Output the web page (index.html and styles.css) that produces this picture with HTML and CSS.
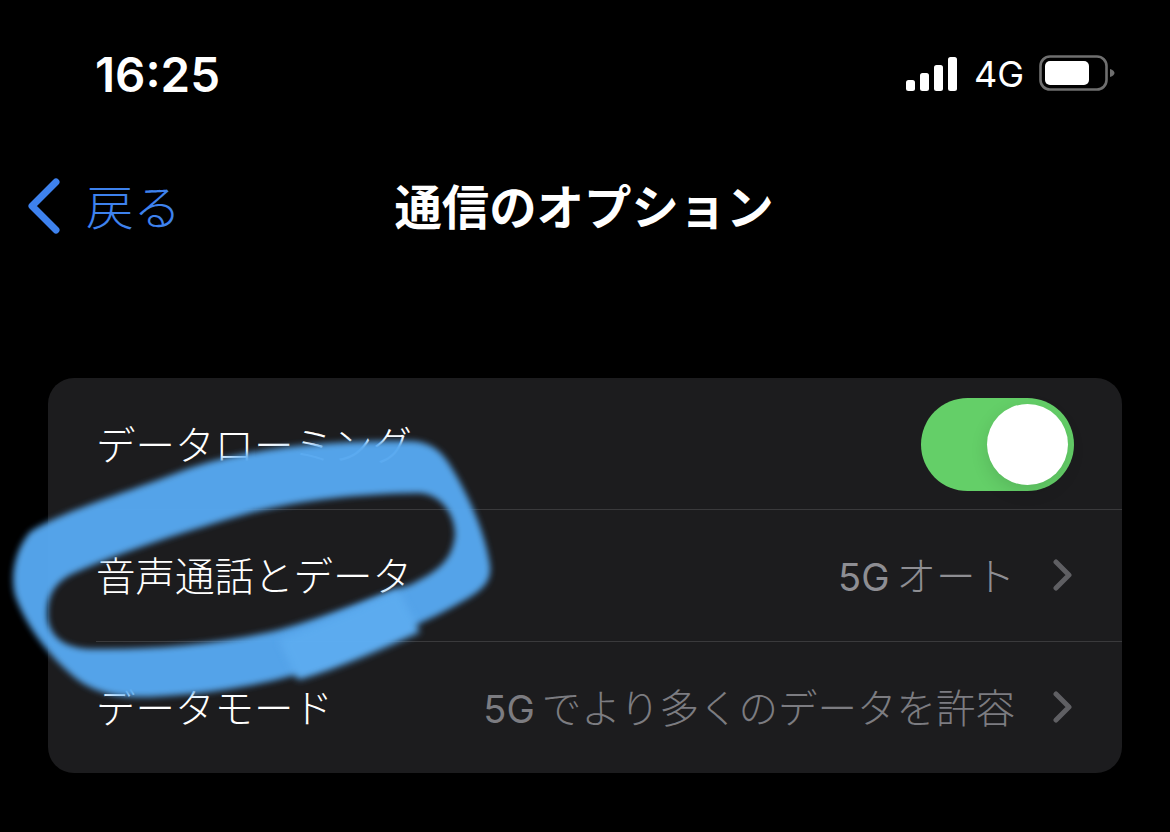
FILE: index.html
```html
<!DOCTYPE html>
<html lang="ja">
<head>
<meta charset="utf-8">
<title>通信のオプション</title>
<link rel="stylesheet" href="styles.css">
</head>
<body>
<div class="screen">
  <header class="status">
    <span class="time">16:25</span>
    <div class="status-right">
      <svg class="signal" width="52" height="36" viewBox="0 0 52 36"><g fill="#fff"><rect x="0" y="24" width="9" height="11" rx="2.5"/><rect x="14" y="17" width="9" height="18" rx="2.5"/><rect x="28" y="9" width="9" height="26" rx="2.5"/><rect x="42" y="1" width="9" height="34" rx="2.5"/></g></svg>
      <span class="net">4G</span>
      <svg class="battery" width="76" height="38" viewBox="0 0 76 38"><rect x="1.500" y="1.500" width="66" height="33" rx="9.500" fill="none" stroke="#6f6f6f" stroke-width="2.600"/><rect x="6" y="6" width="44" height="24" rx="5" fill="#fff"/><path d="M71 14 C74 15 75.500 16.500 75.500 18 C75.500 19.500 74 21 71 22Z" fill="#6f6f6f"/></svg>
    </div>
  </header>
  <nav class="nav">
    <div class="back">
      <svg class="back-icon" width="36" height="60" viewBox="0 0 36 60"><path d="M30 5 L6 29 L30 53" fill="none" stroke="#3e82ee" stroke-width="7" stroke-linecap="round" stroke-linejoin="round"/></svg>
      <span class="back-label">戻る</span>
    </div>
    <h1 class="title">通信のオプション</h1>
  </nav>
  <section class="card">
    <div class="row">
      <span class="label">データローミング</span>
      <div class="switch"><div class="knob"></div></div>
    </div>
    <div class="row">
      <span class="label">音声通話とデータ</span>
      <div class="detail"><span class="value"><span class="latin">5G</span>オート</span>
        <svg class="chev" width="20" height="32" viewBox="0 0 20 32"><path d="M3 3 L16 16 L3 29" fill="none" stroke="#5f5f63" stroke-width="5" stroke-linecap="round" stroke-linejoin="round"/></svg></div>
    </div>
    <div class="row">
      <span class="label">データモード</span>
      <div class="detail"><span class="value dim"><span class="latin">5G</span>でより多くのデータを許容</span>
        <svg class="chev" width="20" height="32" viewBox="0 0 20 32"><path d="M3 3 L16 16 L3 29" fill="none" stroke="#5f5f63" stroke-width="5" stroke-linecap="round" stroke-linejoin="round"/></svg></div>
    </div>
  </section>
  <svg class="scribble" width="1170" height="832" viewBox="0 0 1170 832">
    <defs>
      <filter id="soft" x="-5%" y="-5%" width="110%" height="110%"><feGaussianBlur stdDeviation="3"/></filter>
      <filter id="softer" x="-20%" y="-20%" width="140%" height="140%"><feGaussianBlur stdDeviation="3.500"/></filter>
    </defs>
    <path filter="url(#soft)" fill-rule="evenodd" fill="#56a8f0" d="M405 441 C425 440 438 447 448 462 C465 488 485 530 490 565 C492 582 482 590 465 600 C435 618 400 632 345 657 C300 677 240 692 150 697 C115 698 95 692 78 680 C50 658 25 625 15 595 C10 575 15 550 30 532 C60 512 120 495 190 468 C260 445 340 441 405 441 Z M420 493 C360 494 300 500 250 513 C190 530 120 552 70 575 C52 585 46 600 48 620 C52 640 68 648 90 649 C150 650 210 645 270 632 C320 620 370 597 410 585 C440 570 452 560 455 535 C455 515 442 495 420 493 Z"/>
    <path filter="url(#softer)" fill="#5eb0f6" d="M279 640 C320 624 355 610 380 598 L398 590 L420 632 C380 650 340 668 298 680 Z"/>
  </svg>
</div>
</body>
</html>
```

FILE: styles.css
```css
* { box-sizing: border-box; }
html, body { margin: 0; padding: 0; background: #000; }
body { font-family: "Noto Sans CJK JP", "Noto Sans", sans-serif; color: #fff; }
.screen { position: relative; width: 1170px; height: 832px; overflow: hidden; background: #000; }
.status { height: 146px; padding: 49px 55px 0 95px; display: flex; justify-content: space-between; align-items: flex-start; }
.time { font-family: Inter, "Liberation Sans", sans-serif; font-size: 47.500px; font-weight: 600; line-height: 52px; }
.status-right { display: flex; align-items: center; height: 50px; }
.signal { margin-right: 16px; }
.net { font-family: Inter, "Liberation Sans", sans-serif; font-size: 36px; font-weight: 400; line-height: 40px; margin-right: 15px; }
.nav { position: relative; height: 118px; display: flex; align-items: center; justify-content: center; }
.back { position: absolute; left: 26px; top: 0; height: 118px; display: flex; align-items: center; color: #3e82ee; }
.back-icon { margin: 4px 24px 0 0; }
.back-label { font-size: 47.500px; font-weight: 300; line-height: 60px; }
.title { margin: 0 0 0 -2px; font-size: 47.400px; font-weight: 700; line-height: 60px; }
.card { margin: 114px 48px 0; height: 395px; background: #1c1c1e; border-radius: 26px; display: flex; flex-direction: column; overflow: hidden; }
.row { position: relative; flex: 1; padding: 0 48px; display: flex; align-items: center; justify-content: space-between; }
.row:first-child { flex: 0 0 131px; }
.row + .row::before { content: ""; position: absolute; left: 48px; right: 0; top: 0; height: 1px; background: #3a3a3c; }
.label { font-size: 39.500px; font-weight: 300; line-height: 50px; margin-bottom: 2px; }
.switch { width: 153px; height: 93px; border-radius: 47px; background: #64cf68; position: relative; margin-top: 2px; }
.knob { position: absolute; right: 6px; top: 6px; width: 81px; height: 81px; border-radius: 50%; background: #fff; box-shadow: 0 6px 18px rgba(0,0,0,.12); }
.detail { display: flex; align-items: center; }
.value { font-size: 39.500px; font-weight: 300; line-height: 50px; color: #8e8e93; margin-right: 38px; }
.value.dim { color: #7c7c81; }
.latin { font-family: Inter, "Liberation Sans", sans-serif; font-weight: 400; font-size: 38px; margin-right: 7px; }
.chev { display: block; margin-right: 1px; }
.scribble { position: absolute; left: 0; top: 0; opacity: .97; pointer-events: none; }
```
